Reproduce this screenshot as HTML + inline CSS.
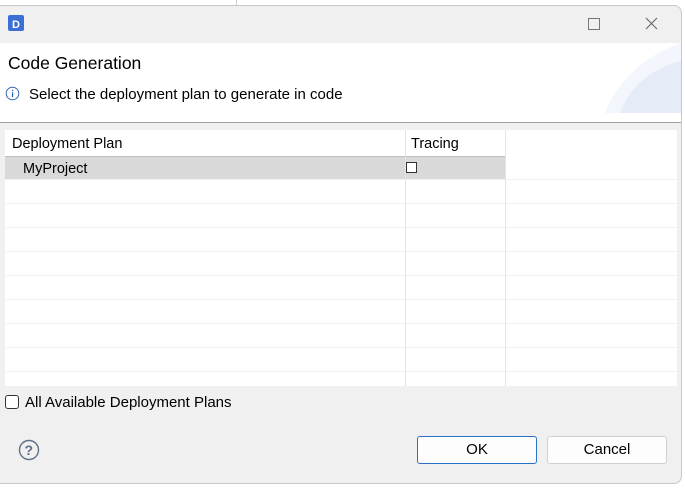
<html><head><style>
body{margin:0;width:685px;height:491px;background:#fff;position:relative;overflow:hidden;font-family:"Liberation Sans",sans-serif;}
.win{position:absolute;left:0;top:5px;width:681px;height:477px;background:#f0f0f0;border:1px solid #c8c8c8;border-left:none;border-radius:0 8px 8px 0;overflow:hidden;}
.hdr{position:absolute;left:0;top:37px;width:681px;height:79px;background:#fff;border-bottom:1px solid #a0a0a0;}
.t{position:absolute;white-space:nowrap;color:#000;}
.tbl{position:absolute;left:5px;top:124px;width:672px;height:256px;background:#fff;}
.hl{position:absolute;left:0;width:672px;height:1px;background:#f0f0f0;}
.vl{position:absolute;top:0;width:1px;height:256px;background:#f0f0f0;}
.btn{position:absolute;top:430px;width:118px;height:26px;border:1px solid #d0d0d0;background:#fdfdfd;border-radius:3px;font-size:15px;text-align:center;line-height:26px;}
</style></head><body>
<div style="position:absolute;left:236px;top:0;width:1px;height:5px;background:#ccc"></div>
<div class="win">
 <svg style="position:absolute;left:7px;top:8px" width="18" height="18"><rect x="1" y="1" width="16" height="16" rx="2" fill="#3b6fd6"/><text x="5" y="14" font-size="11" font-weight="bold" fill="#fff" font-family="Liberation Sans">D</text></svg>
 <div style="position:absolute;left:588px;top:12px;width:10px;height:10px;border:1px solid #777"></div>
 <svg style="position:absolute;left:645px;top:11px" width="13" height="13"><path d="M1 1L12 12M12 1L1 12" stroke="#666" stroke-width="1.1"/></svg>
 <div class="hdr">
  <svg style="position:absolute;left:605px;top:0" width="76" height="70"><path d="M76 0 Q20 20 0 70 L76 70Z" fill="#f3f6fc"/><path d="M76 18 Q30 30 15 70 L76 70Z" fill="#e6ebf8"/></svg>
  <div class="t" style="left:8px;top:10px;font-size:17.5px">Code Generation</div>
  <svg style="position:absolute;left:5px;top:43px" width="15" height="15"><circle cx="7.5" cy="7.5" r="6.3" fill="none" stroke="#2f67b5" stroke-width="1"/><rect x="6.9" y="6.3" width="1.3" height="4.7" fill="#2f67b5"/><rect x="6.9" y="3.8" width="1.3" height="1.3" fill="#2f67b5"/></svg>
  <div class="t" style="left:29px;top:43px;font-size:15px">Select the deployment plan to generate in code</div>
 </div>
 <div class="tbl">
  <div style="position:absolute;left:0;top:26px;width:500px;height:23px;background:#d9d9d9"></div>
  <div class="hl" style="top:49px"></div><div class="hl" style="top:73px"></div><div class="hl" style="top:97px"></div><div class="hl" style="top:121px"></div><div class="hl" style="top:145px"></div><div class="hl" style="top:169px"></div><div class="hl" style="top:193px"></div><div class="hl" style="top:217px"></div><div class="hl" style="top:241px"></div>
  <div style="position:absolute;left:0;top:26px;width:500px;height:1px;background:#c0c0c0"></div>
  <div class="vl" style="left:400px;background:#e4e4e4"></div><div class="vl" style="left:500px;background:#e4e4e4"></div>
  <div class="t" style="left:7px;top:6px;font-size:14.5px">Deployment Plan</div>
  <div class="t" style="left:406px;top:6px;font-size:14.5px">Tracing</div>
  <div class="t" style="left:18px;top:31px;font-size:14.5px">MyProject</div>
  <div style="position:absolute;left:401px;top:32px;width:9px;height:9px;border:1px solid #333;background:#fff"></div>
 </div>
 <div style="position:absolute;left:5px;top:389px;width:12px;height:12px;border:1px solid #333;border-radius:3px;background:#fff"></div>
 <div class="t" style="left:25px;top:388px;font-size:15px">All Available Deployment Plans</div>
 <svg style="position:absolute;left:18px;top:433px" width="22" height="22"><circle cx="11" cy="11" r="9.5" fill="none" stroke="#607089" stroke-width="1.4"/><text x="6.5" y="16" font-size="14" font-weight="bold" fill="#607089" font-family="Liberation Sans">?</text></svg>
 <div class="btn" style="left:417px;border-color:#2a6fc9">OK</div>
 <div class="btn" style="left:547px">Cancel</div>
</div>
</body></html>
